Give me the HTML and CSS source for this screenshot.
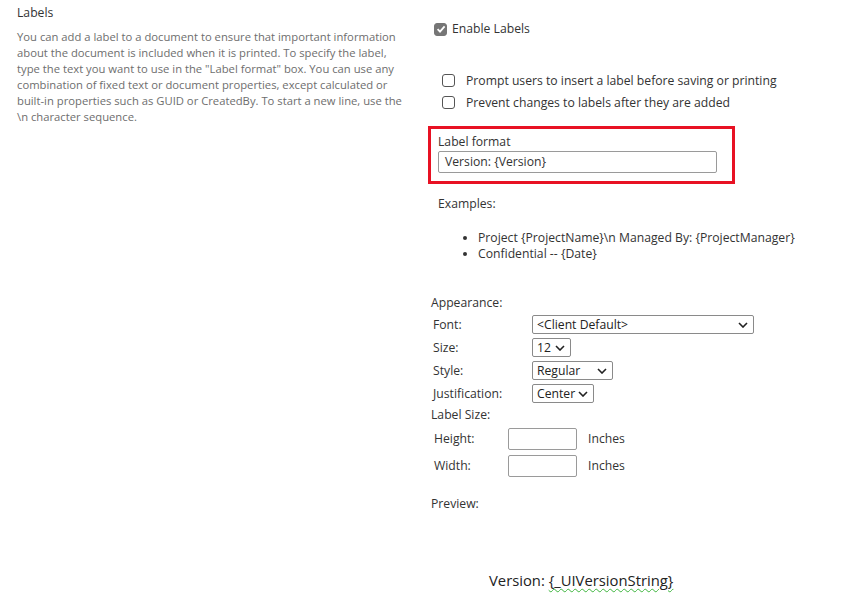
FILE: index.html
```html
<!DOCTYPE html>
<html>
<head>
<meta charset="utf-8">
<link rel="stylesheet" href="styles.css">
</head>
<body>
<div class="page">
  <div class="left">
    <div class="title">Labels</div>
    <p class="desc">You can add a label to a document to ensure that important information<br>about the document is included when it is printed. To specify the label,<br>type the text you want to use in the "Label format" box. You can use any<br>combination of fixed text or document properties, except calculated or<br>built-in properties such as GUID or CreatedBy. To start a new line, use the<br>\n character sequence.</p>
  </div>
  <div class="right">
    <div class="enable">
      <span class="cb checked"><svg width="10" height="10" viewBox="0 0 10 10"><path d="M1.6 5.2 L4 7.6 L8.6 2.4" fill="none" stroke="#fff" stroke-width="1.8"/></svg></span>
      <span>Enable Labels</span>
    </div>
    <div class="options">
      <div class="opt"><span class="cb"></span><span>Prompt users to insert a label before saving or printing</span></div>
      <div class="opt"><span class="cb"></span><span>Prevent changes to labels after they are added</span></div>
    </div>
    <div class="redbox">
      <div class="fmt-label">Label format</div>
      <div class="textbox">Version: {Version}</div>
    </div>
    <div class="examples">
      <div class="ex-title">Examples:</div>
      <ul class="ex-list">
        <li>Project {ProjectName}\n Managed By: {ProjectManager}</li>
        <li>Confidential -- {Date}</li>
      </ul>
    </div>
    <div class="appearance">
      <div class="app-title">Appearance:</div>
      <div class="app-grid">
        <div class="app-label">Font:</div>
        <div class="select w-font"><span>&lt;Client Default&gt;</span><svg class="chev" width="10" height="6" viewBox="0 0 10 6"><path d="M1 1 L5 5 L9 1" fill="none" stroke="#222" stroke-width="1.6"/></svg></div>
        <div class="app-label">Size:</div>
        <div class="select w-size"><span>12</span><svg class="chev" width="10" height="6" viewBox="0 0 10 6"><path d="M1 1 L5 5 L9 1" fill="none" stroke="#222" stroke-width="1.6"/></svg></div>
        <div class="app-label">Style:</div>
        <div class="select w-style"><span>Regular</span><svg class="chev" width="10" height="6" viewBox="0 0 10 6"><path d="M1 1 L5 5 L9 1" fill="none" stroke="#222" stroke-width="1.6"/></svg></div>
        <div class="app-label">Justification:</div>
        <div class="select w-just"><span>Center</span><svg class="chev" width="10" height="6" viewBox="0 0 10 6"><path d="M1 1 L5 5 L9 1" fill="none" stroke="#222" stroke-width="1.6"/></svg></div>
      </div>
      <div class="size-title">Label Size:</div>
      <div class="size-grid">
        <div class="size-label">Height:</div>
        <div class="smallbox"></div>
        <div class="unit">Inches</div>
        <div class="size-label">Width:</div>
        <div class="smallbox"></div>
        <div class="unit">Inches</div>
      </div>
      <div class="preview-title">Preview:</div>
      <div class="preview">Version: <span class="squiggle">{_UIVersionString}</span></div>
    </div>
  </div>
</div>
</body>
</html>
```

FILE: styles.css
```css
* { box-sizing: border-box; }
html, body { margin: 0; padding: 0; background: #fff; }
body {
  font-family: "Open Sans", "Noto Sans", "Liberation Sans", sans-serif;
  color: #333;
  width: 852px;
  height: 611px;
  overflow: hidden;
}
.page {
  display: grid;
  grid-template-columns: 428px 1fr;
}
.left {
  padding: 5px 0 0 17px;
}
.title {
  font-size: 12.2px;
  line-height: 16px;
  color: #333;
}
.desc {
  margin: 8px 0 0 0;
  white-space: nowrap;
  font-size: 11.25px;
  line-height: 16px;
  color: #6e6e6e;
}
.right {
  padding-top: 21px;
}
.enable {
  display: flex;
  align-items: center;
  gap: 5px;
  padding-left: 6px;
  font-size: 12.2px;
  line-height: 16px;
}
.cb {
  display: inline-flex;
  align-items: center;
  justify-content: center;
  width: 13px;
  height: 13px;
  border: 1px solid #555;
  border-radius: 3px;
  background: #fff;
  flex: none;
}
.cb.checked {
  background: #767676;
  border-color: #767676;
}
.options {
  margin-top: 32px;
  padding-left: 14px;
  font-size: 12.2px;
}
.opt {
  display: flex;
  align-items: center;
  gap: 11px;
  height: 22px;
}
.redbox {
  margin-top: 13px;
  width: 307px;
  height: 58px;
  border: 3px solid #e81123;
  padding: 5px 0 0 7px;
}
.fmt-label {
  font-size: 12.2px;
  line-height: 16px;
}
.textbox {
  margin-top: 1px;
  width: 279px;
  height: 22px;
  border: 1px solid #9a9a9a;
  border-radius: 2px;
  padding: 0 6px;
  font-size: 12.2px;
  line-height: 20px;
  color: #333;
}
.examples {
  padding-left: 10px;
  margin-top: 12px;
  font-size: 12.2px;
}
.ex-title { line-height: 16px; }
.ex-list {
  margin: 18px 0 0 0;
  padding-left: 40px;
  line-height: 16px;
}
.appearance {
  margin-top: 33px;
  padding-left: 3px;
  font-size: 12.2px;
}
.app-title { line-height: 16px; }
.app-grid {
  display: grid;
  grid-template-columns: 99px auto;
  grid-auto-rows: 23px;
  align-items: center;
  justify-items: start;
  margin-top: 2px;
  padding-left: 2px;
}
.select {
  height: 19px;
  border: 1px solid #8a8a8a;
  border-radius: 2px;
  display: flex;
  align-items: center;
  justify-content: space-between;
  padding: 0 5px 0 4px;
  font-size: 12.2px;
  color: #222;
  background: #fff;
}
.chev { flex: none; }
.w-font { width: 222px; }
.w-size { width: 39px; padding-left: 4px; }
.w-style { width: 81px; }
.w-just { width: 62px; }
.size-title {
  line-height: 16px;
  margin-top: 2px;
}
.size-grid {
  display: grid;
  grid-template-columns: 74px 80px auto;
  grid-auto-rows: 27px;
  align-items: center;
  justify-items: start;
  margin-top: 2px;
  padding-left: 3px;
}
.smallbox {
  width: 69px;
  height: 22px;
  border: 1px solid #9a9a9a;
  border-radius: 2px;
}
.preview-title {
  margin-top: 17px;
  line-height: 16px;
}
.preview {
  margin-top: 58px;
  padding-left: 58px;
  font-size: 14.8px;
  line-height: 20px;
  color: #222;
}
.squiggle {
  text-decoration: underline wavy #3cb43c;
  text-decoration-thickness: 1px;
  text-underline-offset: 2px;
}
```
